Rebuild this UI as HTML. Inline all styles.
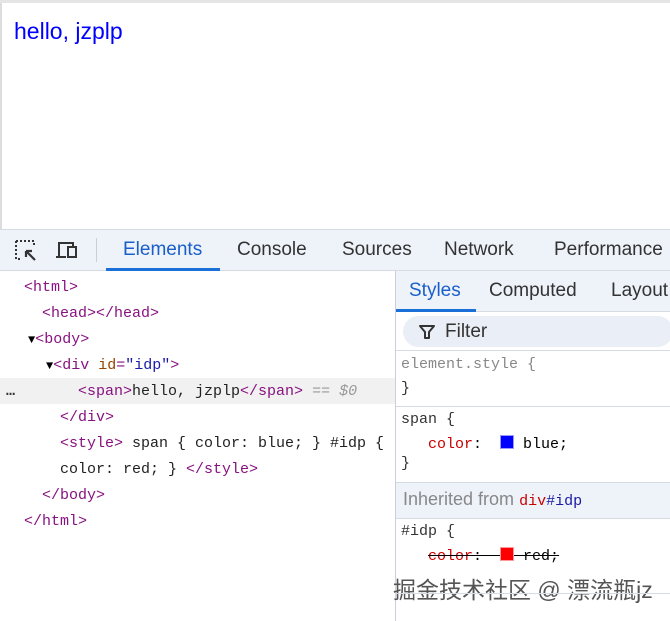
<!DOCTYPE html>
<html><head><meta charset="utf-8"><style>
*{margin:0;padding:0;box-sizing:border-box}
body{width:670px;height:621px;overflow:hidden;background:#fff;font-family:"Liberation Sans",sans-serif;position:relative}
.a{position:absolute}
.m{font-family:"Liberation Mono","Noto Serif CJK SC",monospace;font-size:15px;white-space:pre}
.t{color:#881280}.at{color:#994500}.av{color:#1a1aa6}.k{color:#222}
.tab{position:absolute;font-size:19px;color:#333;top:239px}
</style></head><body>
<div class="a" style="left:0;top:0;width:670px;height:3px;background:#e5e5e5"></div>
<div class="a" style="left:0;top:3px;width:2px;height:226px;background:#ddd"></div>
<div class="a" style="left:14px;top:18px;font-size:23px;color:#0000ff">hello, jzplp</div>
<!-- toolbar -->
<div class="a" style="left:0;top:229px;width:670px;height:42px;background:#eef2f9;border-top:1px solid #d6dbe3;border-bottom:1px solid #d6dbe3"></div>
<svg class="a" style="left:14px;top:239px" width="26" height="24" viewBox="0 0 26 24"><path d="M2 2h18v6M2 2v18h6" fill="none" stroke="#333" stroke-width="2" stroke-dasharray="2 2"/><path d="M12 12l9 9M12 12h6M12 12v6" stroke="#333" stroke-width="2.2" fill="none"/></svg>
<svg class="a" style="left:55px;top:240px" width="26" height="22" viewBox="0 0 26 22"><path d="M4 17V3h14v3M1 17h10" stroke="#333" stroke-width="2" fill="none"/><rect x="13" y="7" width="8" height="10" stroke="#333" stroke-width="2" fill="none"/></svg>
<div class="a" style="left:96px;top:238px;width:1px;height:24px;background:#ccd"></div>
<div class="tab" style="left:123px;color:#1a5fc9">Elements</div>
<div class="a" style="left:106px;top:268px;width:114px;height:3px;background:#1a6fd9"></div>
<div class="tab" style="left:237px">Console</div>
<div class="tab" style="left:342px">Sources</div>
<div class="tab" style="left:444px">Network</div>
<div class="tab" style="left:554px">Performance</div>
<!-- left tree -->
<div class="a" style="left:0;top:378px;width:395px;height:26px;background:#f1f1f1"></div>
<div class="a m" style="left:24px;top:279px"><span class="t">&lt;html&gt;</span></div>
<div class="a m" style="left:42px;top:305px"><span class="t">&lt;head&gt;&lt;/head&gt;</span></div>
<div class="a m" style="left:28px;top:331px"><span style="font-size:12px">▼</span><span class="t">&lt;body&gt;</span></div>
<div class="a m" style="left:46px;top:357px"><span style="font-size:12px">▼</span><span class="t">&lt;div </span><span class="at">id</span><span class="t">=</span><span class="av">"idp"</span><span class="t">&gt;</span></div>
<div class="a m" style="left:6px;top:383px;font-weight:bold;color:#333">…</div>
<div class="a m" style="left:78px;top:383px"><span class="t">&lt;span&gt;</span><span class="k">hello, jzplp</span><span class="t">&lt;/span&gt;</span><span style="color:#999;font-style:italic"> == $0</span></div>
<div class="a m" style="left:60px;top:409px"><span class="t">&lt;/div&gt;</span></div>
<div class="a m" style="left:60px;top:435px"><span class="t">&lt;style&gt;</span><span class="k"> span { color: blue; } #idp {</span></div>
<div class="a m" style="left:60px;top:461px"><span class="k">color: red; } </span><span class="t">&lt;/style&gt;</span></div>
<div class="a m" style="left:42px;top:487px"><span class="t">&lt;/body&gt;</span></div>
<div class="a m" style="left:24px;top:513px"><span class="t">&lt;/html&gt;</span></div>
<!-- right panel -->
<div class="a" style="left:395px;top:271px;width:1px;height:350px;background:#ccd"></div>
<div class="a" style="left:396px;top:271px;width:274px;height:41px;background:#eef2f9;border-bottom:1px solid #d6dbe3"></div>
<div class="a" style="left:409px;top:280px;font-size:19px;color:#1a5fc9">Styles</div>
<div class="a" style="left:396px;top:309px;width:80px;height:3px;background:#1a6fd9"></div>
<div class="a" style="left:489px;top:280px;font-size:19px;color:#333">Computed</div>
<div class="a" style="left:611px;top:280px;font-size:19px;color:#333">Layout</div>
<div class="a" style="left:396px;top:312px;width:274px;height:39px;background:#fff;border-bottom:1px solid #d6dbe3"></div>
<div class="a" style="left:403px;top:316px;width:270px;height:31px;border-radius:16px;background:#eaeef6"></div>
<svg class="a" style="left:419px;top:324px" width="16" height="16" viewBox="0 0 16 16"><path d="M1 2h14L10 8v6H6V8z" fill="none" stroke="#333" stroke-width="2" stroke-linejoin="round"/></svg>
<div class="a" style="left:445px;top:321px;font-size:19px;color:#333">Filter</div>
<div class="a m" style="left:401px;top:356px;color:#888">element.style {</div>
<div class="a m" style="left:401px;top:380px;color:#333">}</div>
<div class="a" style="left:396px;top:406px;width:274px;height:1px;background:#d6dbe3"></div>
<div class="a m" style="left:401px;top:411px;color:#333">span {</div>
<div class="a m" style="left:428px;top:435px"><span style="color:#c80000">color</span>:  <span style="display:inline-block;width:14px;height:14px;background:#00f;border:1px solid #99f;vertical-align:-1px"></span> blue;</div>
<div class="a m" style="left:401px;top:455px;color:#333">}</div>
<div class="a" style="left:396px;top:482px;width:274px;height:37px;background:#eef2f9;border-top:1px solid #d6dbe3;border-bottom:1px solid #d6dbe3"></div>
<div class="a" style="left:403px;top:489px;font-size:18px;color:#888">Inherited from <span class="m" style="font-size:15px;color:#c80000">div</span><span class="m" style="font-size:15px;color:#1a1aa6">#idp</span></div>
<div class="a m" style="left:401px;top:523px;color:#333">#idp {</div>
<div class="a m" style="left:428px;top:547px;text-decoration:line-through"><span style="color:#c80000">color</span>:  <span style="display:inline-block;width:14px;height:14px;background:#f00;border:1px solid #f99;vertical-align:-1px"></span> red;</div>
<div class="a" style="left:393px;top:571px;font-size:23px;color:#555;font-family:'Liberation Sans','Noto Sans CJK SC',sans-serif;text-shadow:0 0 2px #fff">掘金技术社区 @ 漂流瓶jz</div>
<div class="a" style="left:396px;top:593px;width:274px;height:1px;background:#d6dbe3"></div>
</body></html>
